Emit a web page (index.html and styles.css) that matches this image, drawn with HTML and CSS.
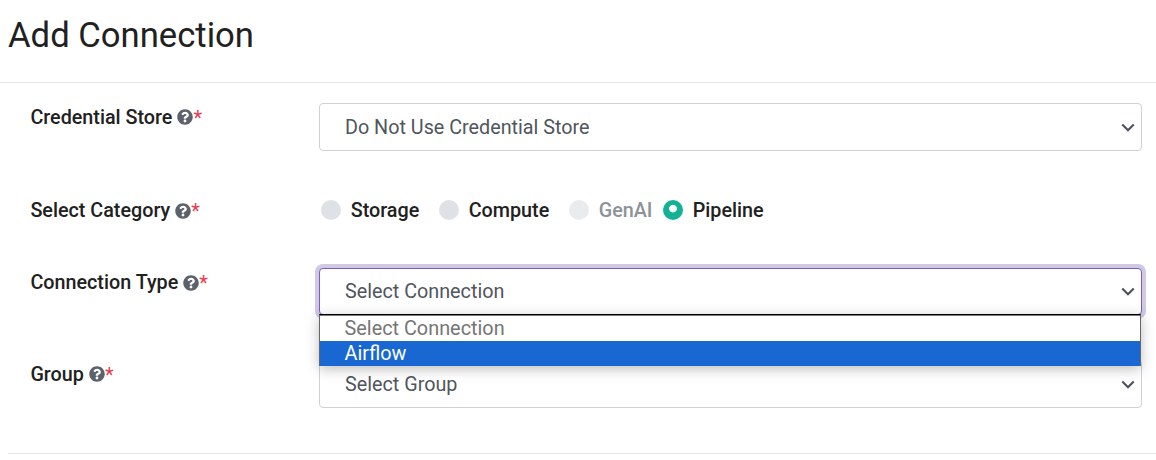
FILE: index.html
```
<!DOCTYPE html>
<html lang="en">
<head>
<meta charset="utf-8">
<title>Add Connection</title>
<link rel="stylesheet" href="styles.css">
</head>
<body>
<svg width="0" height="0" class="defs">
  <symbol id="help" viewBox="0 0 512 512"><path d="M504 256c0 137-111 248-248 248S8 393 8 256C8 119.100 119 8 256 8s248 111.100 248 248zM262.700 90c-54.500 0-89.300 23-116.500 63.800-3.500 5.300-2.400 12.400 2.700 16.300l34.700 26.300c5.200 3.900 12.600 3 16.700-2.100 17.900-22.700 30.100-35.800 57.300-35.800 20.400 0 45.700 13.100 45.700 33 0 15-12.400 22.700-32.500 34C247.100 238.500 216 254.900 216 296v4c0 6.600 5.400 12 12 12h56c6.600 0 12-5.400 12-12v-1.300c0-28.500 83.200-29.600 83.200-106.700 0-58-60.200-102-116.500-102zM256 338c-25.400 0-46 20.600-46 46s20.600 46 46 46 46-20.600 46-46-20.600-46-46-46z"/></symbol>
  <symbol id="chevron" viewBox="0 0 14 9"><path d="M1.300 1.500 7 7.200l5.700-5.700"/></symbol>
</svg>
<header class="page-header"><h1 class="title">Add Connection</h1></header>
<main class="form">
  <div class="row row-store">
    <div class="label"><span class="name">Credential Store</span><svg class="help"><use href="#help"/></svg><span class="required">*</span></div>
    <div class="select"><span class="value">Do Not Use Credential Store</span><svg class="chevron"><use href="#chevron"/></svg></div>
  </div>
  <div class="row row-category">
    <div class="label"><span class="name">Select Category</span><svg class="help"><use href="#help"/></svg><span class="required">*</span></div>
    <div class="radios">
      <label class="radio storage"><span class="dot"></span><span>Storage</span></label>
      <label class="radio compute"><span class="dot"></span><span>Compute</span></label>
      <label class="radio genai disabled"><span class="dot"></span><span>GenAI</span></label>
      <label class="radio checked"><span class="dot"></span><span>Pipeline</span></label>
    </div>
  </div>
  <div class="row row-type">
    <div class="label"><span class="name">Connection Type</span><svg class="help"><use href="#help"/></svg><span class="required">*</span></div>
    <div class="select focused"><span class="value">Select Connection</span><svg class="chevron"><use href="#chevron"/></svg>
      <div class="menu">
        <div class="option muted">Select Connection</div>
        <div class="option active">Airflow</div>
      </div>
    </div>
  </div>
  <div class="row row-group">
    <div class="label"><span class="name">Group</span><svg class="help"><use href="#help"/></svg><span class="required">*</span></div>
    <div class="select"><span class="value">Select Group</span><svg class="chevron"><use href="#chevron"/></svg></div>
  </div>
</main>
<hr class="divider">
</body>
</html>
```
FILE: styles.css
```
* { box-sizing: border-box; }
body { margin: 0; height: 460px; overflow: hidden; background: #fff; color: #212121; font: 400 19.760px/24px Roboto, sans-serif; }
.defs { display: block; }
.page-header { height: 83px; padding: 14px 8px 0; border-bottom: 1px solid #e6e7e9; }
.title { margin: 0; font-size: 34.650px; line-height: 42px; font-weight: 400; }
.form { padding: 20px 14px 0 30px; }
.row { display: grid; grid-template-columns: 289px 823px; align-items: start; }
.row-store { height: 93px; }
.row-category { height: 72px; }
.row-type { height: 92px; }
.row-group { height: 93px; }
.label { display: flex; align-items: center; height: 30px; padding-left: 0.400px; font-weight: 500; }
.row-group .label { height: 29px; }
.row-store .label { height: 29px; }
.name { white-space: nowrap; }
.help { width: 16px; height: 16px; margin: 0 0 1px 5px; fill: #5b626b; }
.required { color: #ea3a50; font-weight: 400; font-size: 20px; }
.select { position: relative; display: flex; align-items: center; justify-content: space-between; height: 48px; padding: 0 6px 0 25px; border: 1px solid #ced1d8; border-radius: 4px; background: #fff; color: #50565d; }
.value { padding-top: 1px; }
.chevron { width: 14px; height: 9px; fill: none; stroke: #4d525a; stroke-width: 2.100; }
.focused { height: 47px; border-color: #7a5cc4; box-shadow: 0 0 0 4px #cfc9e3; }
.focused .value { padding-top: 0; }
.radios { display: flex; padding: 1px 0 0 2px; font-weight: 500; }
.radio { display: flex; align-items: center; height: 27px; gap: 9.700px; }
.storage { width: 118px; }
.compute { width: 130px; }
.genai { width: 94px; }
.dot { width: 20px; height: 20px; margin-bottom: 1px; border-radius: 50%; background: #dee1e6; }
.disabled { color: #8b929a; }
.disabled .dot { background: #e9ecef; }
.checked .dot { background: radial-gradient(circle at 50% 43%, #fff 3.500px, #14b294 4.200px); }
.menu { position: absolute; z-index: 2; left: -1px; top: 45px; width: 822px; height: 52px; border: 1px solid #666; border-top: 1px solid #000; border-bottom: 0; background: #fff; box-shadow: 0 3px 12px rgba(0,0,0,.26); }
.option { height: 25px; padding-left: 24.500px; line-height: 25px; font-size: 19.850px; }
.muted { height: 26px; border-top: 1px solid #777; color: #757575; }
.active { background: #1967d2; color: #fff; }
.divider { margin: 0 0 0 8px; border: 0; border-top: 1px solid #e6e7e9; }
```
